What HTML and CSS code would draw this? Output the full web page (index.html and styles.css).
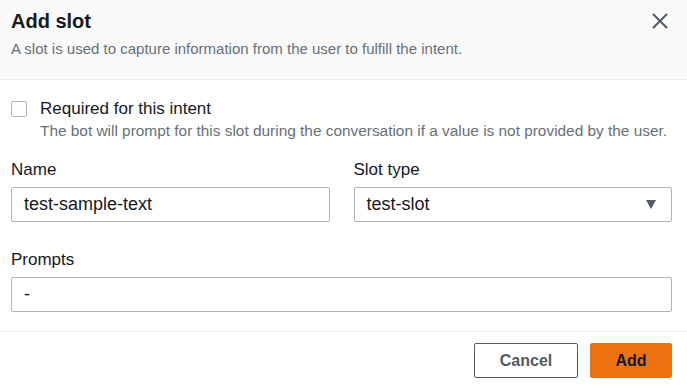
FILE: index.html
```html
<!DOCTYPE html>
<html lang="en">
<head>
    <meta charset="UTF-8">
    <meta name="viewport" content="width=device-width, initial-scale=1.0">
    <title>Add slot</title>
    <link rel="stylesheet" href="styles.css">
</head>
<body>
<div class="modal">
    <div class="modal-header">
        <div class="title-row">
            <h2>Add slot</h2>
            <button class="close" aria-label="Close">
                <svg width="16" height="16" viewBox="0 0 16 16">
                    <path d="M1 1 L15 15 M15 1 L1 15" stroke="#545b64" stroke-width="2" fill="none"/>
                </svg>
            </button>
        </div>
        <p class="subtitle">A slot is used to capture information from the user to fulfill the intent.</p>
    </div>

    <div class="modal-body">
        <label class="check">
            <span class="box"></span>
            <span>Required for this intent</span>
        </label>
        <p class="hint">The bot will prompt for this slot during the conversation if a value is not provided by the user.</p>

        <div class="fields">
            <div class="field">
                <label for="slot-name">Name</label>
                <input type="text" id="slot-name" value="test-sample-text">
            </div>
            <div class="field">
                <label>Slot type</label>
                <div class="select">
                    <span>test-slot</span>
                    <svg width="10" height="9" viewBox="0 0 10 9">
                        <path d="M0 0 H10 L5 9 Z" fill="#545b64"/>
                    </svg>
                </div>
            </div>
            <div class="field full-width">
                <label for="prompts">Prompts</label>
                <input type="text" id="prompts" value="-">
            </div>
        </div>
    </div>

    <div class="modal-footer">
        <button class="btn btn-normal">Cancel</button>
        <button class="btn btn-primary">Add</button>
    </div>
</div>
</body>
</html>
```

FILE: styles.css
```css
body {
    margin: 0;
    font-family: "Liberation Sans", Arial, sans-serif;
    color: #16191f;
    background: #fff
}

.modal {
    width: 687px
}

.modal-header {
    background: #fafafa;
    border-bottom: 1px solid #eaeded;
    padding: 8px 15px 21px 11px;
    height: 50px
}

.title-row {
    display: flex;
    justify-content: space-between;
    align-items: center;
    height: 26px
}

h2 {
    margin: 0;
    font-size: 20px;
    line-height: 26px;
    font-weight: bold
}

.close {
    border: none;
    background: none;
    padding: 0;
    margin-right: 4px;
    width: 16px;
    height: 16px;
    display: flex;
    cursor: pointer
}

.subtitle {
    margin: 6px 0 0;
    font-size: 15px;
    line-height: 18px;
    color: #687078
}

.modal-body {
    padding: 20px 15px 19px 11px
}

.check {
    display: flex;
    align-items: center;
    gap: 13px;
    font-size: 17px;
    line-height: 18px
}

.box {
    width: 14px;
    height: 14px;
    border: 1px solid #aab7b8;
    border-radius: 2px;
    background: #fff
}

.hint {
    margin: 4px 0 0 29px;
    font-size: 15.4px;
    line-height: 18px;
    color: #687078
}

.fields {
    display: grid;
    grid-template-columns: 1fr 1fr;
    column-gap: 24px;
    row-gap: 28px;
    margin-top: 20px
}

.full-width {
    grid-column: 1 / -1
}

.field label {
    display: block;
    font-size: 17px;
    line-height: 20px;
    margin-bottom: 7px
}

input, .select {
    width: 100%;
    height: 35px;
    box-sizing: border-box;
    border: 1px solid #aab7b8;
    border-radius: 2px;
    padding: 0 12px;
    font-family: inherit;
    font-size: 18px;
    color: #16191f;
    outline: none
}

.select {
    display: flex;
    align-items: center;
    justify-content: space-between;
    padding-right: 15px
}

.modal-footer {
    border-top: 1px solid #eaeded;
    padding: 11px 15px;
    display: flex;
    justify-content: flex-end;
    gap: 12px
}

.btn {
    height: 35px;
    font-family: inherit;
    font-size: 16px;
    font-weight: bold;
    border-radius: 2px;
    cursor: pointer
}

.btn-normal {
    width: 104px;
    background: #fff;
    border: 1px solid #545b64;
    color: #545b64
}

.btn-primary {
    width: 82px;
    background: #ec7211;
    border: 1px solid #ec7211;
    color: #16191f
}
```
